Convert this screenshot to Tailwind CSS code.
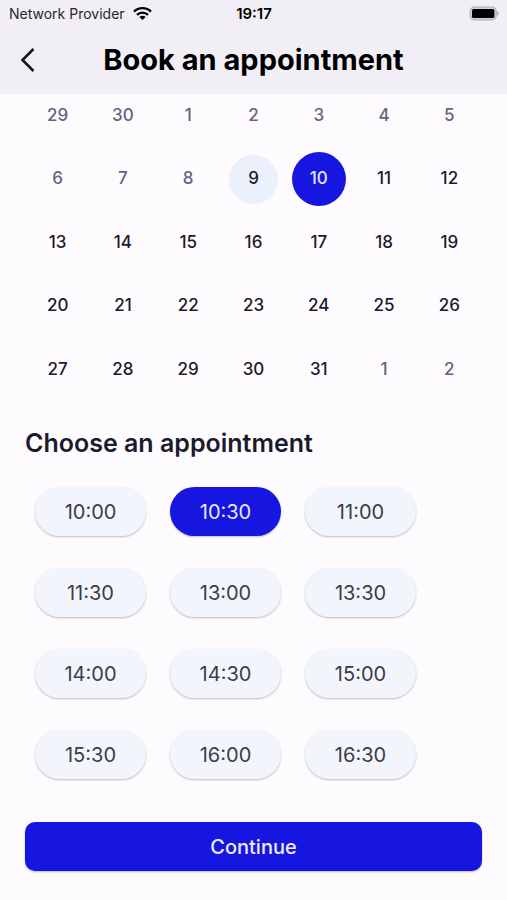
<!DOCTYPE html>
<html lang="en">
<head>
<meta charset="utf-8">
<meta name="viewport" content="width=device-width, initial-scale=1">
<title>Book an appointment</title>
<script src="https://cdn.jsdelivr.net/npm/@tailwindcss/browser@4"></script>
</head>
<body class="min-h-screen bg-[#fefbff] font-['Inter','Liberation_Sans',sans-serif] text-[#1c1b2b]">
<header class="relative z-10 bg-[#f2eef5] pb-3 text-black">
  <div class="grid h-7 grid-cols-[1fr_auto_1fr] items-center pr-2 pl-[9px] text-sm">
    <div class="flex items-center gap-2 text-[#29272c]">
      <span>Network Provider</span>
      <svg class="h-[14px] w-[19px]" viewBox="0 0 19 14" fill="none" stroke="#000" stroke-width="2.3" aria-label="Wi-Fi">
        <path d="M1 4.600a12.2 12.2 0 0 1 17 0"/>
        <path d="M4 7.900a7.8 7.8 0 0 1 11 0"/>
        <path d="M9.5 13 6.4 10a4.4 4.4 0 0 1 6.2 0z" fill="#000" stroke="none"/>
      </svg>
    </div>
    <time class="text-[15px] font-semibold">19:17</time>
    <svg class="h-4 w-[31px] justify-self-end" viewBox="0 0 31 16" aria-label="Battery">
      <rect x="2.2" y="1.2" width="26" height="12.600" rx="4" fill="#d5d2d8" stroke="#b5b2b8" stroke-width="1.2"/>
      <rect x="4" y="3" width="22.400" height="9" rx="1.5" fill="#000"/>
      <path d="M29.200 5.100c2 .8 2 4 0 4.800z" fill="#a9a6ac"/>
    </svg>
  </div>
  <div class="grid h-[54px] grid-cols-[48px_1fr_48px] items-center pt-2">
    <button type="button" aria-label="Back" class="flex h-12 items-center pl-5">
      <svg class="h-6 w-4" viewBox="0 0 16 24" fill="none" stroke="#19171c" stroke-width="2.600"><path d="M13.500 1 2.500 12l11 11"/></svg>
    </button>
    <h1 class="text-center text-[29px] leading-9 font-bold">Book an appointment</h1>
  </div>
</header>
<main class="px-[25px]">
  <table class="-mt-[10px] w-full table-fixed text-center text-[17px] font-medium" aria-label="Calendar">
    <tbody class="*:odd:h-[63px] *:even:h-16 [&_td]:p-0">
      <tr class="text-[#64647f]"><td>29</td><td>30</td><td>1</td><td>2</td><td>3</td><td>4</td><td>5</td></tr>
      <tr>
        <td class="text-[#64647f]">6</td><td class="text-[#64647f]">7</td><td class="text-[#64647f]">8</td>
        <td><button type="button" class="mx-auto block size-[49px] rounded-full bg-[#ebf0fb]">9</button></td>
        <td><button type="button" aria-pressed="true" class="mx-auto block size-[54px] rounded-full bg-[#1616e0] text-[#e4e4ff]">10</button></td>
        <td><button type="button">11</button></td><td><button type="button">12</button></td>
      </tr>
      <tr><td><button type="button">13</button></td><td><button type="button">14</button></td><td><button type="button">15</button></td><td><button type="button">16</button></td><td><button type="button">17</button></td><td><button type="button">18</button></td><td><button type="button">19</button></td></tr>
      <tr><td><button type="button">20</button></td><td><button type="button">21</button></td><td><button type="button">22</button></td><td><button type="button">23</button></td><td><button type="button">24</button></td><td><button type="button">25</button></td><td><button type="button">26</button></td></tr>
      <tr><td><button type="button">27</button></td><td><button type="button">28</button></td><td><button type="button">29</button></td><td><button type="button">30</button></td><td><button type="button">31</button></td><td class="text-[#64647f]">1</td><td class="text-[#64647f]">2</td></tr>
    </tbody>
  </table>
  <h2 class="mt-6 text-[25px] leading-9 font-semibold">Choose an appointment</h2>
  <div class="mt-[26px] ml-2.5 grid grid-cols-[repeat(3,111px)] gap-x-6 gap-y-8 text-xl text-[#3c3c47]">
    <button type="button" class="h-[49px] rounded-full bg-[#f3f5fc] shadow-[0_1px_2px_#00000040]">10:00</button>
    <button type="button" aria-pressed="true" class="h-[49px] rounded-full bg-[#1616e0] text-[#e8e8ff] shadow-[0_1px_2px_#00000040]">10:30</button>
    <button type="button" class="h-[49px] rounded-full bg-[#f3f5fc] shadow-[0_1px_2px_#00000040]">11:00</button>
    <button type="button" class="h-[49px] rounded-full bg-[#f3f5fc] shadow-[0_1px_2px_#00000040]">11:30</button>
    <button type="button" class="h-[49px] rounded-full bg-[#f3f5fc] shadow-[0_1px_2px_#00000040]">13:00</button>
    <button type="button" class="h-[49px] rounded-full bg-[#f3f5fc] shadow-[0_1px_2px_#00000040]">13:30</button>
    <button type="button" class="h-[49px] rounded-full bg-[#f3f5fc] shadow-[0_1px_2px_#00000040]">14:00</button>
    <button type="button" class="h-[49px] rounded-full bg-[#f3f5fc] shadow-[0_1px_2px_#00000040]">14:30</button>
    <button type="button" class="h-[49px] rounded-full bg-[#f3f5fc] shadow-[0_1px_2px_#00000040]">15:00</button>
    <button type="button" class="h-[49px] rounded-full bg-[#f3f5fc] shadow-[0_1px_2px_#00000040]">15:30</button>
    <button type="button" class="h-[49px] rounded-full bg-[#f3f5fc] shadow-[0_1px_2px_#00000040]">16:00</button>
    <button type="button" class="h-[49px] rounded-full bg-[#f3f5fc] shadow-[0_1px_2px_#00000040]">16:30</button>
  </div>
  <button type="button" class="mt-[43px] h-[49px] w-full rounded-[10px] bg-[#1616e0] text-xl font-medium text-[#ececff] shadow-[0_1px_2px_#00000040]">Continue</button>
</main>
</body>
</html>
